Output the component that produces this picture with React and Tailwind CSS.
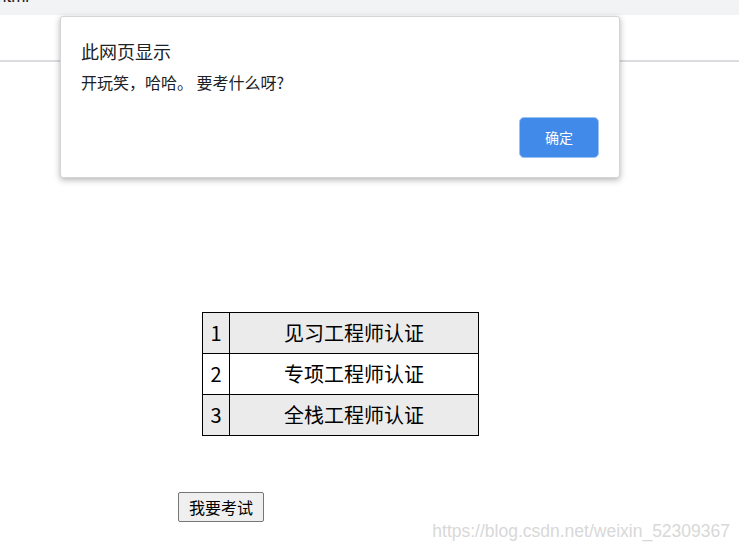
import React from "react";

const rows = [
  { n: 1, name: "见习工程师认证", bg: "bg-[#ebebeb]" },
  { n: 2, name: "专项工程师认证", bg: "bg-white" },
  { n: 3, name: "全栈工程师认证", bg: "bg-[#ebebeb]" },
];

const cjk = "font-['Microsoft_YaHei','Noto_Sans_CJK_SC',sans-serif]";

const App = () => {
  return (
    <div className={`relative w-[739px] h-[548px] overflow-hidden bg-white text-black ${cjk}`}>
      {/* browser chrome */}
      <div className="h-[15px] bg-[#f1f3f4] overflow-hidden">
        <div className="-mt-[13px] -ml-[3px] text-[17px] leading-[20px] text-[#202124] font-['Liberation_Sans',sans-serif]">
          html
        </div>
      </div>
      <div className="h-[47px] border-b-2 border-[#dadce0]"></div>

      {/* page */}
      <table className="ml-[202px] mt-[250px] border-collapse text-[20px] leading-none">
        <tbody>
          {rows.map((r) => (
            <tr key={r.n} className={`h-[41px] ${r.bg}`}>
              <td className="w-[27px] border border-black text-center">{r.n}</td>
              <td className="w-[249px] border border-black text-center">{r.name}</td>
            </tr>
          ))}
        </tbody>
      </table>
      <button className="ml-[178px] mt-[56px] h-[30px] px-[10px] text-[16px] leading-none bg-[#efefef] border border-[#767676] rounded-[2px]">
        我要考试
      </button>

      {/* watermark */}
      <div className="absolute right-[9px] top-[518px] text-[17.5px] text-[#d8d8d8] font-['Liberation_Sans',sans-serif]">
        https://blog.csdn.net/weixin_52309367
      </div>

      {/* alert dialog */}
      <div className="absolute left-[60px] top-[16px] w-[560px] h-[162px] bg-white border border-[#d4d4d4] rounded-[3px] shadow-[0_2px_6px_rgba(0,0,0,0.3)] px-[20px]">
        <div className="mt-[22px] text-[18px] leading-[24px] text-[#202124]">此网页显示</div>
        <div className="mt-[8px] text-[16px] leading-[22px] text-[#202124] whitespace-pre">开玩笑，哈哈。 要考什么呀?</div>
        <div className="flex justify-end mt-[24px]">
          <button className="w-[80px] h-[41px] rounded-[5px] bg-[#418ae9] border border-[#9cc2f5] text-white text-[14px]">
            确定
          </button>
        </div>
      </div>
    </div>
  );
};

export default App;
